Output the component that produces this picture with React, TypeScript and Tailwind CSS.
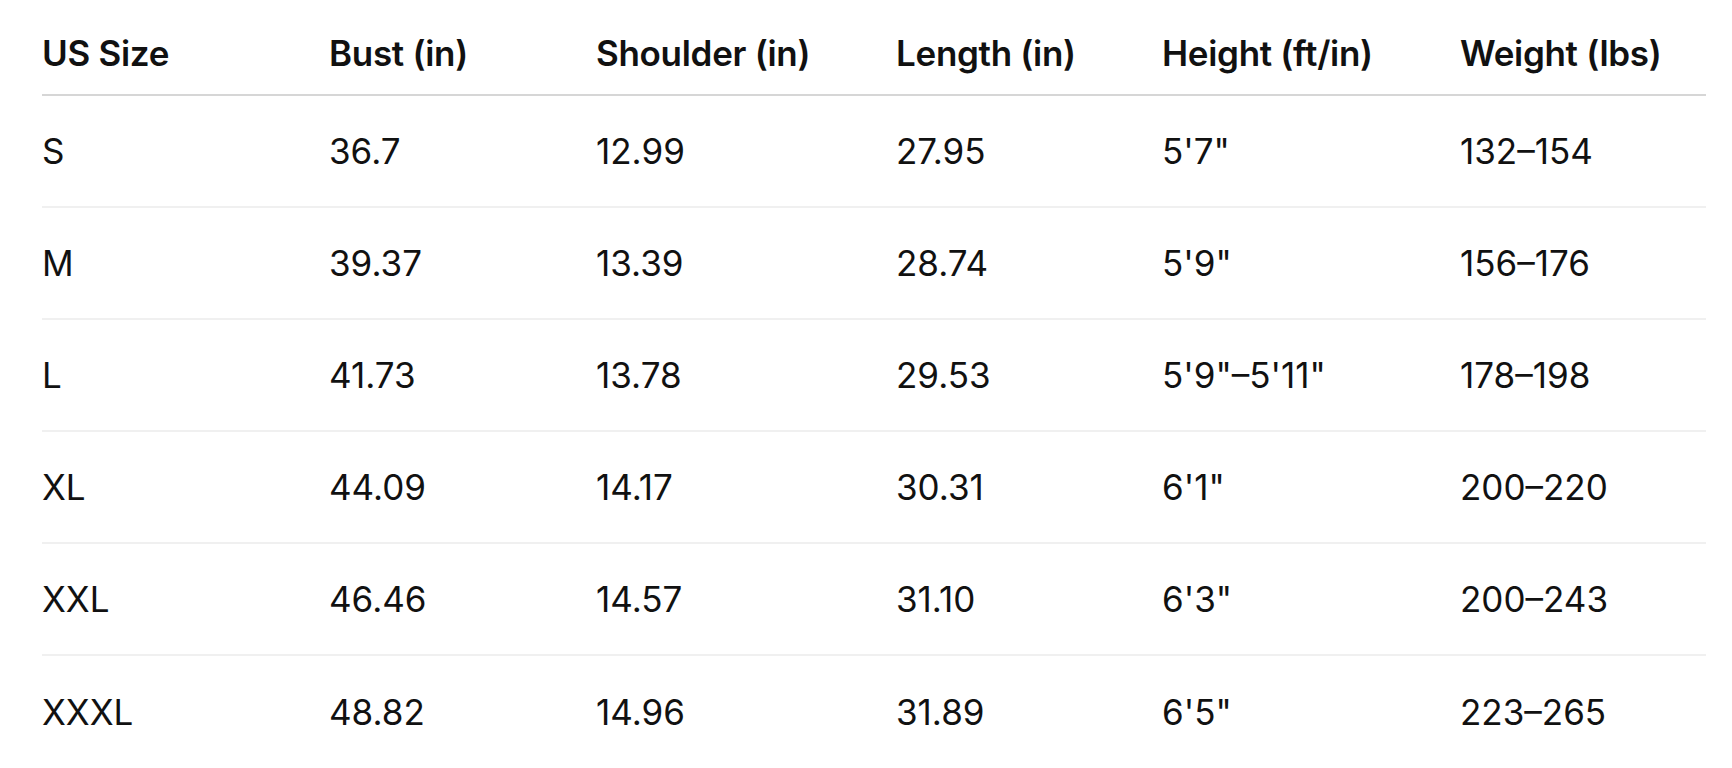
import React from "react";

const headers = ["US Size", "Bust (in)", "Shoulder (in)", "Length (in)", "Height (ft/in)", "Weight (lbs)"];

const rows = [
	["S", "36.7", "12.99", "27.95", "5'7\"", "132–154"],
	["M", "39.37", "13.39", "28.74", "5'9\"", "156–176"],
	["L", "41.73", "13.78", "29.53", "5'9\"–5'11\"", "178–198"],
	["XL", "44.09", "14.17", "30.31", "6'1\"", "200–220"],
	["XXL", "46.46", "14.57", "31.10", "6'3\"", "200–243"],
	["XXXL", "48.82", "14.96", "31.89", "6'5\"", "223–265"],
];

const cols = "grid grid-cols-[287px_267px_300px_266px_298px_246px]";

export default function App() {
	return (
		<div className="min-h-screen w-full bg-white text-[#111111] font-['Inter','Liberation_Sans',sans-serif]">
			<div className="pl-[42px] pr-[26px]">
				{/* Header */}
				<div className={`${cols} h-[96px] pt-[12px] items-center border-b-2 border-[#d6d6d6]`}>
					{headers.map((h) => (
						<div key={h} className="text-[35px] font-semibold tracking-[-0.3px]">
							{h}
						</div>
					))}
				</div>
				{/* Rows */}
				{rows.map((row, i) => (
					<div
						key={row[0]}
						className={`${cols} h-[112px] items-center ${
							i < rows.length - 1 ? "border-b-2 border-[#f0f0f0]" : ""
						}`}
					>
						{row.map((cell, j) => (
							<div key={j} className="text-[35px] font-normal">
								{cell}
							</div>
						))}
					</div>
				))}
			</div>
		</div>
	);
}
